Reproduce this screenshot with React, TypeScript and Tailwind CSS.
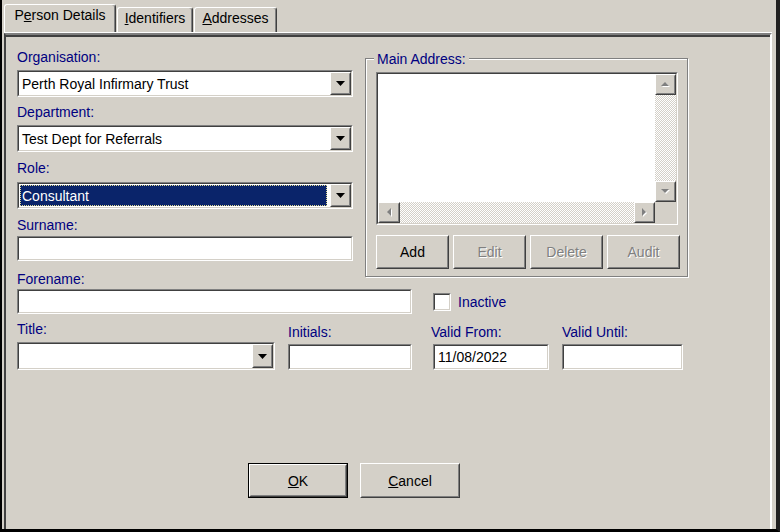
import React from 'react';

// Classic Win32 dialog: "Person Details" tab of a person record

type BoxProps = { className?: string; children?: React.ReactNode };

function Sunken({ className = '', children }: BoxProps) {
  return (
    <div className={`border border-t-[#808080] border-l-[#808080] border-b-white border-r-white ${className}`}>
      <div className="h-full w-full border border-t-[#404040] border-l-[#404040] border-b-[#d4d0c8] border-r-[#d4d0c8] bg-white flex">
        {children}
      </div>
    </div>
  );
}

function Raised({ className = '', children }: BoxProps) {
  return (
    <div className={`border border-t-white border-l-white border-b-[#404040] border-r-[#404040] bg-[#d4d0c8] ${className}`}>
      <div className="h-full w-full border border-t-[#d4d0c8] border-l-[#d4d0c8] border-b-[#808080] border-r-[#808080] flex items-center justify-center">
        {children}
      </div>
    </div>
  );
}

function Label({ className = '', children }: BoxProps) {
  return <div className={`h-[16px] text-[14px] leading-[16px] text-[#000080] whitespace-nowrap ${className}`}>{children}</div>;
}

function DownArrow() {
  return (
    <svg width="9" height="5" viewBox="0 0 9 5">
      <polygon points="0,0 9,0 4.5,5" fill="#000" />
    </svg>
  );
}

function ScrollArrow({ dir }: { dir: 'up' | 'down' | 'left' | 'right' }) {
  const pts: Record<string, string> = {
    up: '4,1 8,5 0,5',
    down: '0,1 8,1 4,5',
    left: '5,0 5,8 1,4',
    right: '1,0 1,8 5,4',
  };
  const size = dir === 'up' || dir === 'down' ? { w: 9, h: 7 } : { w: 7, h: 9 };
  return (
    <svg width={size.w} height={size.h} viewBox={`0 0 ${size.w} ${size.h}`}>
      <polygon points={pts[dir]} fill="#fff" transform="translate(1 1)" />
      <polygon points={pts[dir]} fill="#808080" />
    </svg>
  );
}

function Combo({ value, className = '', selected = false }: { value: string; className?: string; selected?: boolean }) {
  return (
    <Sunken className={`h-[27px] ${className}`}>
      {selected ? (
        <div className="flex-1 p-[1px] pr-[3px]">
          <div className="h-full bg-[#0a246a] outline-1 outline-dotted outline-[#e0d890] -outline-offset-1 flex items-center pl-[2px] text-white text-[14px]">
            {value}
          </div>
        </div>
      ) : (
        <div className="flex-1 flex items-center pl-[3px] text-[14px] text-black whitespace-nowrap">{value}</div>
      )}
      <Raised className="w-[21px] h-full">
        <DownArrow />
      </Raised>
    </Sunken>
  );
}

function TextBox({ value = '', className = '' }: { value?: string; className?: string }) {
  return (
    <Sunken className={className}>
      <div className="flex-1 flex items-center pl-[3px] text-[14px] text-black">{value}</div>
    </Sunken>
  );
}

function PushButton({ label, disabled = false, className = '' }: { label: React.ReactNode; disabled?: boolean; className?: string }) {
  return (
    <Raised className={className}>
      <span
        className={`text-[14px] ${disabled ? 'text-[#808080] [text-shadow:1px_1px_0_#fff]' : 'text-black'}`}
      >
        {label}
      </span>
    </Raised>
  );
}

const tabs = [
  { key: 'pd', label: <>P<u>e</u>rson Details</>, w: 'w-[112px]', active: true },
  { key: 'id', label: <><u>I</u>dentifiers</>, w: 'w-[76px]', active: false },
  { key: 'ad', label: <><u>A</u>ddresses</>, w: 'w-[83px]', active: false },
];

export default function App() {
  return (
    <div className="w-[780px] h-[532px] bg-[#d4d0c8] border-l-2 border-l-black border-b-[3px] border-b-black border-r-4 border-r-[#202020] flex flex-col font-['Liberation_Sans',Arial,sans-serif] text-[14px] leading-[16px]">
      <div className="ml-[2px] mr-[4px] flex-1 flex flex-col">
        {/* tab strip */}
        <div className="h-[33px] flex items-end gap-[1px] border-b border-b-white">
          {tabs.map((t) => (
            <div
              key={t.key}
              className={`${t.w} ${t.active ? 'h-[28px]' : 'h-[25px]'} flex justify-center pt-[2px] border-l border-t border-r border-l-white border-t-white border-r-[#404040] shadow-[inset_-1px_0_0_#808080] rounded-t-[3px] text-black whitespace-nowrap`}
            >
              {t.label}
            </div>
          ))}
        </div>

        {/* tab page */}
        <div className="flex-1 flex flex-col border-t-2 border-t-[#808080] border-l-2 border-l-[#404040] border-r-2 border-r-white">
          <div className="flex-1 border-t-2 border-t-[#404040] pl-[11px] pt-[12px]">
            <div className="flex items-start">
              <div className="w-[336px] flex flex-col">
                <Label>Organisation:</Label>
                <Combo className="mt-[5px] w-[336px]" value="Perth Royal Infirmary Trust" />
                <Label className="mt-[7px]">Department:</Label>
                <Combo className="mt-[5px] w-[336px]" value="Test Dept for Referrals" />
                <Label className="mt-[8px]">Role:</Label>
                <Combo className="mt-[6px] w-[336px]" value="Consultant" selected />
                <Label className="mt-[8px]">Surname:</Label>
                <TextBox className="mt-[3px] w-[336px] h-[25px]" />
                <Label className="mt-[10px]">Forename:</Label>
              </div>

              {/* Main Address group */}
              <div className="relative ml-[12px] mt-[9px] w-[323px] h-[219px] border border-[#808080] shadow-[inset_1px_1px_0_#fff,1px_1px_0_#fff] pl-[10px] pt-[13px]">
                <div className="absolute -top-[8px] left-[8px] px-[3px] bg-[#d4d0c8] text-[14px] leading-[16px] text-[#000080]">
                  Main Address:
                </div>
                <Sunken className="w-[302px] h-[153px]">
                  <div className="flex-1 grid grid-cols-[1fr_21px] grid-rows-[1fr_21px]">
                    <div className="bg-white" />
                    <div className="flex flex-col">
                      <Raised className="h-[21px]">
                        <ScrollArrow dir="up" />
                      </Raised>
                      <div className="flex-1 bg-[repeating-conic-gradient(#d4d0c8_0_25%,#ffffff_0_50%)] bg-[length:2px_2px]" />
                      <Raised className="h-[21px]">
                        <ScrollArrow dir="down" />
                      </Raised>
                    </div>
                    <div className="flex">
                      <Raised className="w-[22px]">
                        <ScrollArrow dir="left" />
                      </Raised>
                      <div className="flex-1 bg-[repeating-conic-gradient(#d4d0c8_0_25%,#ffffff_0_50%)] bg-[length:2px_2px]" />
                      <Raised className="w-[21px]">
                        <ScrollArrow dir="right" />
                      </Raised>
                    </div>
                    <div className="bg-[#d4d0c8]" />
                  </div>
                </Sunken>
                <div className="mt-[10px] flex gap-[4px]">
                  <PushButton className="w-[73px] h-[34px]" label="Add" />
                  <PushButton className="w-[73px] h-[34px]" label="Edit" disabled />
                  <PushButton className="w-[73px] h-[34px]" label="Delete" disabled />
                  <PushButton className="w-[73px] h-[34px]" label="Audit" disabled />
                </div>
              </div>
            </div>

            {/* Forename + Inactive */}
            <div className="mt-[2px] flex items-center">
              <TextBox className="w-[395px] h-[25px]" />
              <div className="ml-[21px] w-[18px] h-[18px] border border-t-[#808080] border-l-[#808080] border-b-white border-r-white">
                <div className="h-full border border-t-[#404040] border-l-[#404040] border-b-[#d4d0c8] border-r-[#d4d0c8] bg-white" />
              </div>
              <span className="ml-[7px] text-[#000080]">Inactive</span>
            </div>

            {/* Title / Initials / Valid dates */}
            <div className="mt-[7px] flex items-end">
              <div className="w-[258px] flex flex-col">
                <Label className="mb-[5px]">Title:</Label>
                <Sunken className="h-[28px] w-[258px]">
                  <div className="flex-1" />
                  <Raised className="w-[21px] h-full">
                    <DownArrow />
                  </Raised>
                </Sunken>
              </div>
              <div className="ml-[13px] w-[124px] flex flex-col">
                <Label className="mb-[4px]">Initials:</Label>
                <TextBox className="w-[124px] h-[26px]" />
              </div>
              <div className="ml-[21px] w-[116px] flex flex-col">
                <Label className="mb-[4px] -ml-[2px]">Valid From:</Label>
                <TextBox className="w-[116px] h-[26px]" value="11/08/2022" />
              </div>
              <div className="ml-[13px] w-[121px] flex flex-col">
                <Label className="mb-[4px]">Valid Until:</Label>
                <TextBox className="w-[121px] h-[26px]" />
              </div>
            </div>

            {/* OK / Cancel */}
            <div className="mt-[93px] ml-[231px] flex gap-[12px]">
              <div className="border border-black">
                <PushButton className="w-[98px] h-[33px]" label={<><u>O</u>K</>} />
              </div>
              <PushButton className="w-[100px] h-[35px]" label={<><u>C</u>ancel</>} />
            </div>
          </div>
        </div>
      </div>
    </div>
  );
}
